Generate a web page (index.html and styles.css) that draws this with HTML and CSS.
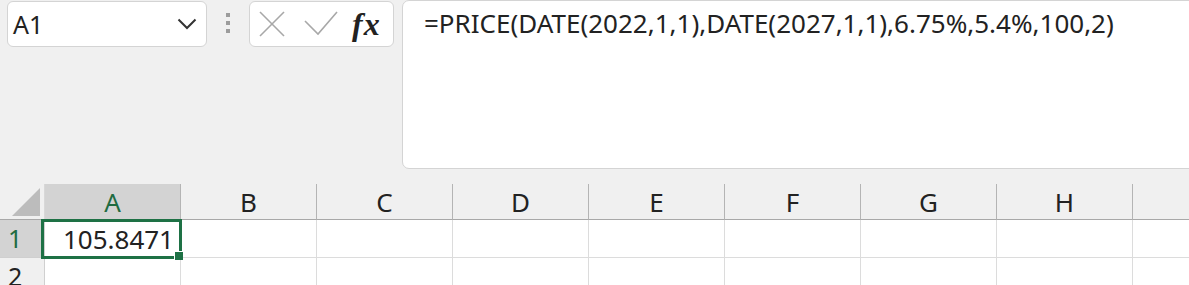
FILE: index.html
```html
<!DOCTYPE html>
<html lang="en">
<head>
    <meta charset="UTF-8">
    <meta name="viewport" content="width=device-width, initial-scale=1.0">
    <title>PRICE</title>
    <link rel="stylesheet" href="styles.css">
</head>
<body>
    <div class="topbar">
        <div class="namebox">
            <span class="name">A1</span>
            <svg class="chevron" width="20" height="12" viewBox="0 0 20 12">
                <polyline points="1.5,1.5 10,10 18.5,1.5" fill="none" stroke="#333" stroke-width="2"/>
            </svg>
        </div>
        <div class="grip"><span></span><span></span><span></span></div>
        <div class="funcbox">
            <svg class="icon-x" width="26" height="26" viewBox="0 0 26 26">
                <line x1="1" y1="1" x2="25" y2="25" stroke="#a8a8a8" stroke-width="1.6"/>
                <line x1="25" y1="1" x2="1" y2="25" stroke="#a8a8a8" stroke-width="1.6"/>
            </svg>
            <svg class="icon-check" width="36" height="26" viewBox="0 0 36 26">
                <polyline points="2,11 15,24 34,2" fill="none" stroke="#a8a8a8" stroke-width="1.6"/>
            </svg>
            <span class="fx">fx</span>
        </div>
        <div class="formula">=PRICE(DATE(2022,1,1),DATE(2027,1,1),6.75%,5.4%,100,2)</div>
    </div>

    <div class="sheet">
        <div class="grid">
            <div class="corner">
                <svg width="44" height="35" viewBox="0 0 44 35">
                    <polygon points="40,4 40,32 12,32" fill="#bcbcbc"/>
                </svg>
            </div>
            <div class="col-head active">A</div>
            <div class="col-head">B</div>
            <div class="col-head">C</div>
            <div class="col-head">D</div>
            <div class="col-head">E</div>
            <div class="col-head">F</div>
            <div class="col-head">G</div>
            <div class="col-head">H</div>
            <div class="col-head"></div>

            <div class="row-head active">1</div>
            <div class="cell num">105.8471</div>
            <div class="cell"></div>
            <div class="cell"></div>
            <div class="cell"></div>
            <div class="cell"></div>
            <div class="cell"></div>
            <div class="cell"></div>
            <div class="cell"></div>
            <div class="cell"></div>

            <div class="row-head">2</div>
            <div class="cell"></div>
            <div class="cell"></div>
            <div class="cell"></div>
            <div class="cell"></div>
            <div class="cell"></div>
            <div class="cell"></div>
            <div class="cell"></div>
            <div class="cell"></div>
            <div class="cell"></div>
        </div>
        <div class="selection"><span class="handle"></span></div>
    </div>
</body>
</html>
```

FILE: styles.css
```css
* {
    box-sizing: border-box;
}

body {
    margin: 0;
    padding: 0;
    height: 285px;
    overflow: hidden;
    background-color: #f0f0f0;
    font-family: "Noto Sans", "Open Sans", sans-serif;
    color: #222;
}

.topbar {
    display: flex;
    align-items: flex-start;
    height: 169px;
    padding-top: 1px;
}

.namebox {
    display: flex;
    align-items: center;
    justify-content: space-between;
    width: 200px;
    height: 46px;
    margin-left: 7px;
    padding: 0 9px 0 5px;
    background-color: #fff;
    border: 1px solid #d4d4d4;
    border-radius: 6px;
}

.name {
    font-size: 25px;
    line-height: 43px;
    padding-top: 1px;
}

.grip {
    display: flex;
    flex-direction: column;
    gap: 4px;
    margin: 12px 19px 0;
}

.grip span {
    display: block;
    width: 4px;
    height: 4px;
    background-color: #9c9c9c;
}

.funcbox {
    display: flex;
    align-items: center;
    width: 145px;
    height: 46px;
    padding-left: 9px;
    background-color: #fff;
    border: 1px solid #d4d4d4;
    border-radius: 6px;
}

.icon-x {
    margin-top: -1px;
}

.icon-check {
    margin-left: 18px;
    margin-top: -3px;
}

.fx {
    margin-left: 13px;
    font-family: "Liberation Serif", "DejaVu Serif", serif;
    font-style: italic;
    font-weight: bold;
    font-size: 32px;
    line-height: 40px;
    letter-spacing: 1px;
    color: #222;
}

.formula {
    flex: 1;
    height: 169px;
    margin-top: -1px;
    margin-left: 8px;
    margin-right: -12px;
    padding: 4px 0 0 21px;
    background-color: #fff;
    border: 1px solid #d4d4d4;
    border-radius: 7px;
    font-size: 26px;
    line-height: 36px;
    white-space: nowrap;
}

.sheet {
    position: relative;
    margin-top: 15px;
}

.grid {
    display: grid;
    grid-template-columns: 45px repeat(9, 136px);
    grid-template-rows: 36px 38px 38px;
}

.corner {
    background-color: #f0f0f0;
    border-right: 1px solid #d8d8d8;
    border-bottom: 1px solid #a8a8a8;
}

.corner svg {
    display: block;
}

.col-head {
    background-color: #f0f0f0;
    border-right: 1px solid #b4b4b4;
    border-bottom: 1px solid #a8a8a8;
    text-align: center;
    font-size: 26px;
    line-height: 35px;
    padding-top: 1px;
}

.row-head {
    background-color: #f0f0f0;
    border-right: 1px solid #d0d0d0;
    border-bottom: 1px solid #cfcfcf;
    padding-left: 8px;
    font-size: 25px;
    line-height: 36px;
}

.active {
    background-color: #d3d3d3;
    color: #1f6b41;
}

.cell {
    background-color: #fff;
    border-right: 1px solid #dcdcdc;
    border-bottom: 1px solid #dcdcdc;
    font-size: 26px;
    line-height: 36px;
    padding-top: 1px;
}

.num {
    text-align: right;
    padding-right: 6px;
}

.selection {
    position: absolute;
    left: 41px;
    top: 35px;
    width: 141px;
    height: 40px;
    border: 3px solid #1e7145;
}

.handle {
    position: absolute;
    right: -4px;
    bottom: -4px;
    width: 9px;
    height: 9px;
    background-color: #1e7145;
    border-left: 1px solid #fff;
    border-top: 1px solid #fff;
}
```
